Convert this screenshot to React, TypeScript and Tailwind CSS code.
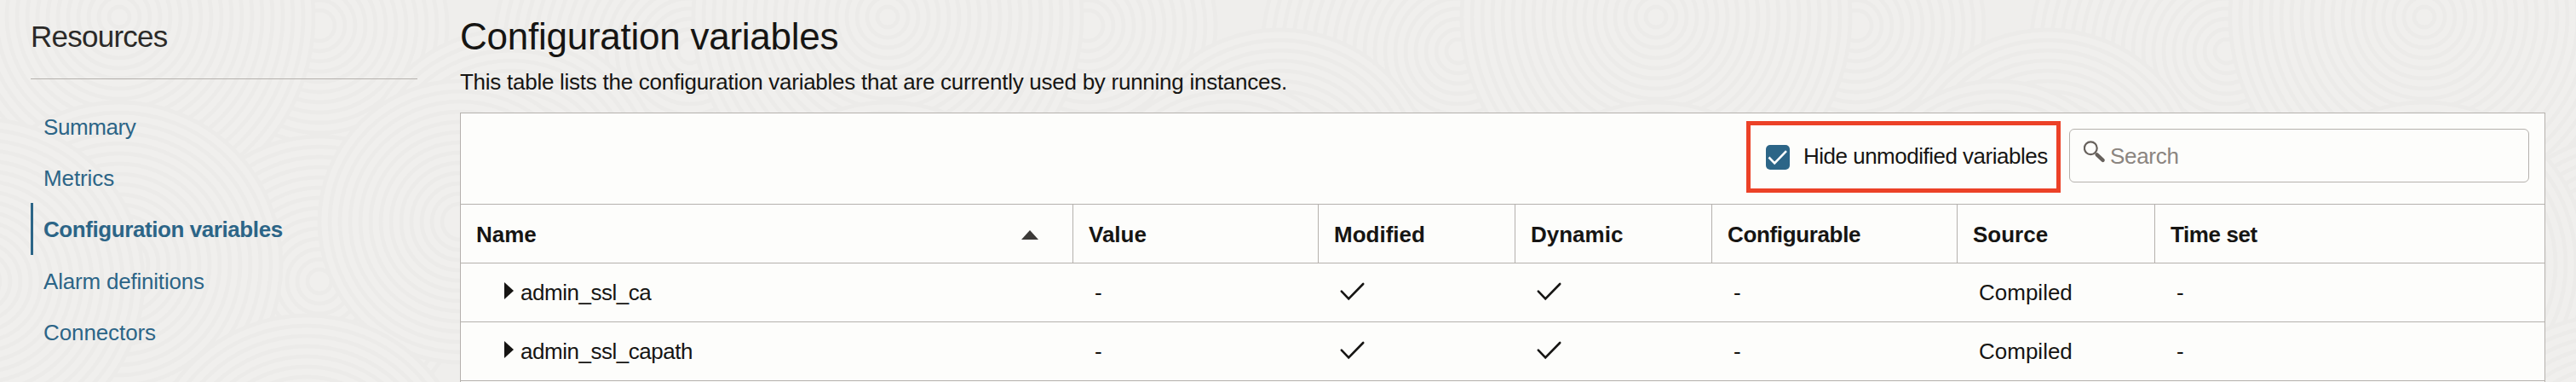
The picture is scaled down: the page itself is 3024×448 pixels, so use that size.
import type { ReactNode } from "react";

type Ring = { x: number; y: number; r: number };

const MOTIFS: Ring[] = [
  { x: 810, y: 60, r: 230 },
  { x: 375, y: 30, r: 150 },
  { x: 140, y: 20, r: 228 },
  { x: 600, y: 215, r: 180 },
  { x: 375, y: 330, r: 170 },
  { x: 540, y: 260, r: 165 },
  { x: 140, y: 310, r: 190 },
  { x: 360, y: 560, r: 190 },
  { x: 880, y: 330, r: 190 },
];

function Backdrop() {
  return (
    <svg className="absolute inset-0 h-full w-full" aria-hidden="true">
      <defs>
        <pattern id="rings" width="902" height="600" patternUnits="userSpaceOnUse">
          <rect width="902" height="600" fill="#efeeec" />
          {MOTIFS.map((m, i) =>
            [-902, 0, 902].map((dx) => (
              <g key={`${i}-${dx}`} fill="none" stroke="#ecebe9" strokeWidth="4.5">
                <circle cx={m.x + dx} cy={m.y} r={m.r} fill="#f0efed" stroke="none" />
                {Array.from({ length: Math.floor(m.r / 12) }, (_, k) => (
                  <circle key={k} cx={m.x + dx} cy={m.y} r={m.r - k * 12} />
                ))}
              </g>
            )),
          )}
        </pattern>
      </defs>
      <rect width="100%" height="100%" fill="url(#rings)" />
    </svg>
  );
}

const NAV = [
  { label: "Summary", style: "tracking-[-0.4px]" },
  { label: "Metrics", style: "tracking-[-0.1px]" },
  { label: "Configuration variables", style: "font-bold tracking-[-0.42px]", active: true },
  { label: "Alarm definitions", style: "tracking-[-0.2px]" },
  { label: "Connectors", style: "tracking-[-0.1px]" },
];

function Check() {
  return (
    <svg className="mt-[21px] h-6 w-[34px]" viewBox="0 0 34 24" fill="none" stroke="#161513" strokeWidth="2.6" strokeLinecap="round" strokeLinejoin="miter">
      <path d="M4.8 11.6 L13.2 20.4 L30.2 3" />
    </svg>
  );
}

const COLS = "grid grid-cols-[719px_288px_231px_231px_288px_232px_1fr]";

function Head({ children, last = false }: { children: ReactNode; last?: boolean }) {
  return (
    <div className={`flex h-[68px] items-center justify-between pl-[18px] pt-[2px] font-bold ${last ? "" : "border-r border-[#b5b1ad]"}`}>
      {children}
    </div>
  );
}

function Row({ name }: { name: string }) {
  return (
    <div className={`${COLS} h-[69px] border-b border-[#b5b1ad] leading-[68px]`}>
      <div className="flex pl-[51px]">
        <svg className="mt-[22px] h-5 w-[11px]" viewBox="0 0 11 20">
          <path d="M0 0 L11 10 L0 20 Z" fill="#161513" />
        </svg>
        <span className="pl-2 tracking-[-0.48px]">{name}</span>
      </div>
      <div className="pl-[25px]">-</div>
      <div className="pl-[22px]"><Check /></div>
      <div className="pl-[22px]"><Check /></div>
      <div className="pl-[25px]">-</div>
      <div className="pl-[25px]">Compiled</div>
      <div className="pl-[25px]">-</div>
    </div>
  );
}

export default function App() {
  return (
    <div className="relative h-[448px] w-[3024px] overflow-hidden bg-[#f0efed] font-['Liberation_Sans',Arial,sans-serif] text-[26px] text-[#161513]">
      <Backdrop />
      <div className="relative flex">
        <aside className="ml-9 w-[454px] shrink-0">
          <h2 className="h-[92px] pt-[19px] text-[35px] leading-[48px] tracking-[-0.75px] text-[#2b2a28]">Resources</h2>
          <nav className="border-t border-[#b5b1ad] pt-[25px]">
            {NAV.map((n) => (
              <a
                key={n.label}
                className={`block h-[60.2px] border-l-3 pl-3 leading-[62px] text-[#2c6587] ${n.active ? "border-[#2c6587]" : "border-transparent"} ${n.style}`}
              >
                {n.label}
              </a>
            ))}
          </nav>
        </aside>
        <main className="ml-[50px] w-[2448px]">
          <h1 className="h-[72px] whitespace-nowrap pt-[18px] text-[44px] leading-[50px] tracking-[-0.25px]">Configuration variables</h1>
          <p className="h-[60px] whitespace-nowrap leading-[49px] tracking-[-0.26px]">This table lists the configuration variables that are currently used by running instances.</p>
          <section className="h-[330px] border border-[#b5b1ad] bg-[#fdfdfb]">
            <div className="flex h-[107px] items-start justify-end border-b border-[#b5b1ad] pr-[18px]">
              <label className="mr-[10px] mt-[9px] flex h-[84px] w-[369px] items-center border-[5px] border-[#ec4127] pl-[18px]">
                <span className="flex h-[29px] w-7 shrink-0 items-center justify-center rounded-[5px] bg-[#2c6587]">
                  <svg className="h-[29px] w-7" viewBox="0 0 28 29" fill="none" stroke="#fff" strokeWidth="2.6">
                    <path d="M3.5 14.5 L10.2 21.4 L24 7.2" />
                  </svg>
                </span>
                <span className="whitespace-nowrap pb-px pl-4 tracking-[-0.5px]">Hide unmodified variables</span>
              </label>
              <div className="mt-[18px] flex h-[63px] w-[540px] rounded-[6px] border border-[#b5b1ad] pl-4">
                <svg className="mt-[13px] h-[27px] w-[27px]" viewBox="0 0 27 27" fill="none" stroke="#67615c">
                  <circle cx="8.3" cy="8.7" r="7.4" strokeWidth="2.2" />
                  <path d="M15.6 16.3 L22.6 22.9" strokeWidth="4.4" strokeLinecap="round" />
                </svg>
                <span className="pl-1 leading-[63px] tracking-[-0.3px] text-[#8b8580]">Search</span>
              </div>
            </div>
            <div className={`${COLS} h-[69px] border-b border-[#b5b1ad]`}>
              <Head>
                <span>Name</span>
                <svg className="mr-[40px] h-[11px] w-5" viewBox="0 0 20 11">
                  <path d="M10 0 L20 11 L0 11 Z" fill="#3c3a38" />
                </svg>
              </Head>
              <Head>Value</Head>
              <Head>Modified</Head>
              <Head>Dynamic</Head>
              <Head><span className="tracking-[-0.35px]">Configurable</span></Head>
              <Head>Source</Head>
              <Head last><span className="tracking-[-0.4px]">Time set</span></Head>
            </div>
            <Row name="admin_ssl_ca" />
            <Row name="admin_ssl_capath" />
          </section>
        </main>
      </div>
    </div>
  );
}
